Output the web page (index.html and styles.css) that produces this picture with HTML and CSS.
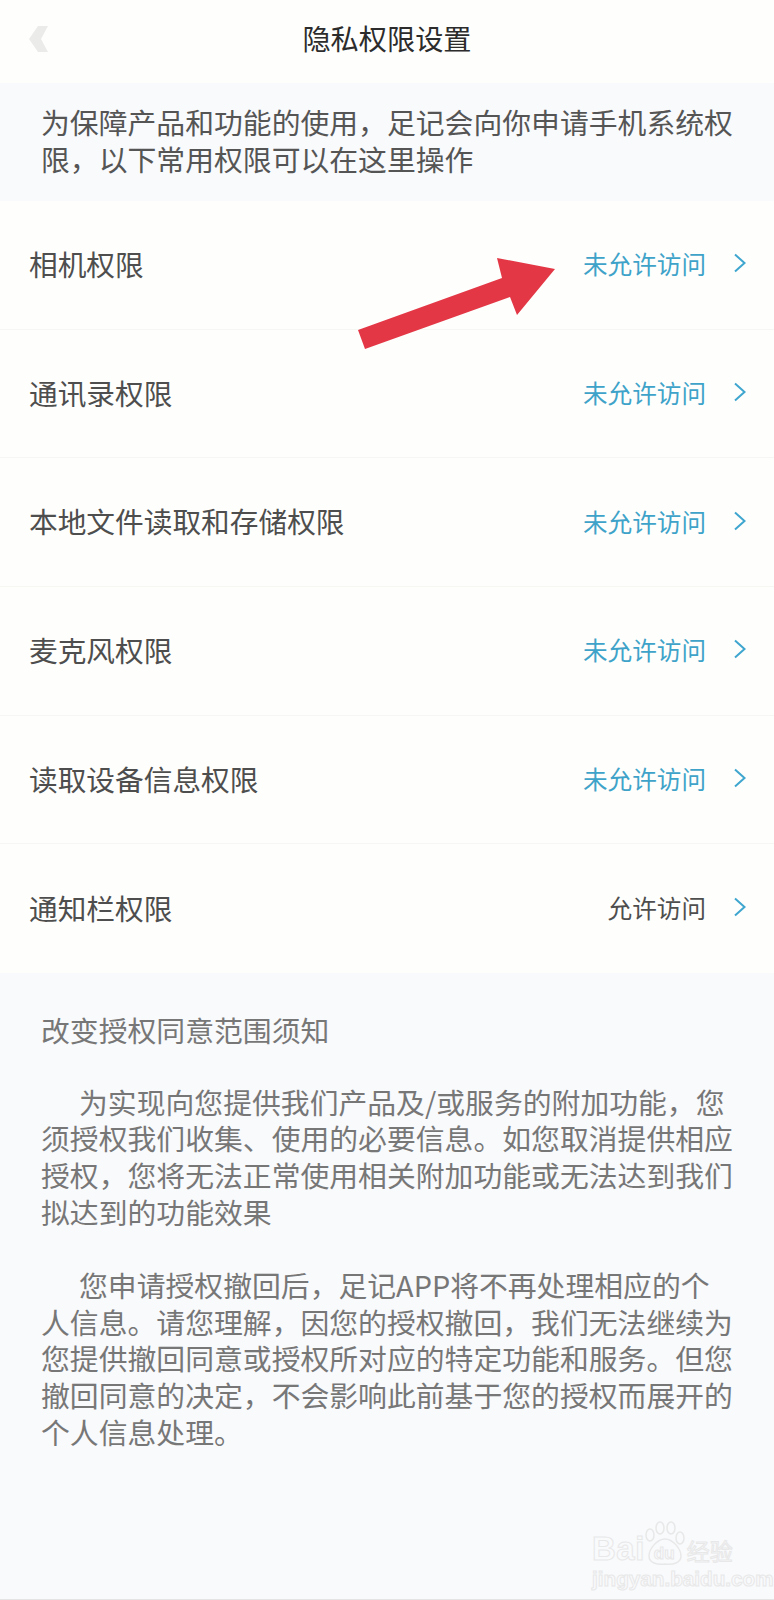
FILE: index.html
```html
<!DOCTYPE html>
<html lang="zh-CN">
<head>
    <meta charset="UTF-8">
    <meta name="viewport" content="width=device-width, initial-scale=1.0">
    <title>隐私权限设置</title>
    <link rel="stylesheet" href="styles.css">
</head>
<body>
    <div class="page">
        <div class="header">
            <svg class="back-icon" width="20" height="26" viewBox="0 0 20 26">
                <path d="M9 0H19L12 13L19 26H9L0 13Z" fill="#ebebe9"/>
            </svg>
            <div class="title">隐私权限设置</div>
        </div>

        <div class="notice">为保障产品和功能的使用，足记会向你申请手机系统权限，以下常用权限可以在这里操作</div>

        <div class="list">
            <div class="row">
                <span class="row-name">相机权限</span>
                <span class="row-status denied">未允许访问</span>
                <svg class="row-arrow" width="14" height="20" viewBox="0 0 14 20"><path d="M2 1.5L11.5 10L2 18.5" fill="none" stroke="#3fa6cf" stroke-width="2"/></svg>
            </div>
            <div class="row">
                <span class="row-name">通讯录权限</span>
                <span class="row-status denied">未允许访问</span>
                <svg class="row-arrow" width="14" height="20" viewBox="0 0 14 20"><path d="M2 1.5L11.5 10L2 18.5" fill="none" stroke="#3fa6cf" stroke-width="2"/></svg>
            </div>
            <div class="row">
                <span class="row-name">本地文件读取和存储权限</span>
                <span class="row-status denied">未允许访问</span>
                <svg class="row-arrow" width="14" height="20" viewBox="0 0 14 20"><path d="M2 1.5L11.5 10L2 18.5" fill="none" stroke="#3fa6cf" stroke-width="2"/></svg>
            </div>
            <div class="row">
                <span class="row-name">麦克风权限</span>
                <span class="row-status denied">未允许访问</span>
                <svg class="row-arrow" width="14" height="20" viewBox="0 0 14 20"><path d="M2 1.5L11.5 10L2 18.5" fill="none" stroke="#3fa6cf" stroke-width="2"/></svg>
            </div>
            <div class="row">
                <span class="row-name">读取设备信息权限</span>
                <span class="row-status denied">未允许访问</span>
                <svg class="row-arrow" width="14" height="20" viewBox="0 0 14 20"><path d="M2 1.5L11.5 10L2 18.5" fill="none" stroke="#3fa6cf" stroke-width="2"/></svg>
            </div>
            <div class="row">
                <span class="row-name">通知栏权限</span>
                <span class="row-status">允许访问</span>
                <svg class="row-arrow" width="14" height="20" viewBox="0 0 14 20"><path d="M2 1.5L11.5 10L2 18.5" fill="none" stroke="#3fa6cf" stroke-width="2"/></svg>
            </div>
        </div>

        <div class="terms">
            <p class="terms-title">改变授权同意范围须知</p>
            <p class="terms-text">为实现向您提供我们产品及/或服务的附加功能，您须授权我们收集、使用的必要信息。如您取消提供相应授权，您将无法正常使用相关附加功能或无法达到我们拟达到的功能效果</p>
            <p class="terms-text">您申请授权撤回后，足记APP将不再处理相应的个人信息。请您理解，因您的授权撤回，我们无法继续为您提供撤回同意或授权所对应的特定功能和服务。但您撤回同意的决定，不会影响此前基于您的授权而展开的个人信息处理。</p>
        </div>

        <!-- red arrow drawn over the first row -->
        <svg class="red-arrow" width="774" height="360" viewBox="0 0 774 360">
            <path d="M358 330L365 349L510 297L517 315L555 269L497 258L502 278Z" fill="#e33746"/>
        </svg>

        <div class="watermark">
            <div class="wm-top">
                <span class="wm-bai">Bai</span>
                <span class="wm-paw">
                    <svg width="40" height="46" viewBox="0 0 40 46">
                        <g fill="none" stroke="#e8e8e8" stroke-width="1.5">
                            <ellipse cx="5" cy="14" rx="4" ry="6"/>
                            <ellipse cx="15" cy="7" rx="4" ry="6"/>
                            <ellipse cx="26" cy="7" rx="4" ry="6"/>
                            <ellipse cx="35" cy="17" rx="4" ry="6"/>
                            <path d="M20 18C12 18 4 28 4 35C4 42 12 44 20 43C28 44 36 42 36 35C36 28 28 18 20 18Z"/>
                        </g>
                    </svg>
                    <span class="wm-du">du</span>
                </span>
                <span class="wm-jy">经验</span>
            </div>
            <div class="wm-url">jingyan.baidu.com</div>
        </div>
    </div>
</body>
</html>
```
FILE: styles.css
```css
* {
    box-sizing: border-box;
}

body {
    margin: 0;
    background-color: #f9fafc;
    font-family: "Noto Sans CJK SC", "Liberation Sans", sans-serif;
}

.page {
    position: relative;
    width: 774px;
    height: 1600px;
    overflow: hidden;
    background-color: #f9fafc;
    border-bottom: 1px solid #e4e4e4;
}

.header {
    height: 83px;
    padding-bottom: 8px;
    background-color: #fefefc;
    display: flex;
    align-items: center;
    justify-content: center;
    position: relative;
}

.back-icon {
    position: absolute;
    left: 29px;
    top: 26px;
}

.title {
    font-size: 28.2px;
    color: #2c2c2c;
}

.notice {
    height: 118px;
    padding: 21px 41px 0;
    font-size: 28.83px;
    line-height: 36.5px;
    color: #555;
}

.list {
    background-color: #fefefc;
}

.row {
    height: 128.7px;
    padding: 0 27px 3px 29px;
    display: flex;
    align-items: center;
    border-bottom: 1px solid #f6f6f3;
}

.row:last-child {
    border-bottom: none;
}

.row-name {
    flex: 1;
    font-size: 28.7px;
    color: #4e4e4e;
}

.row-status {
    font-size: 24.6px;
    color: #4e4e4e;
}

.denied {
    color: #3fa3c9;
}

.row-arrow {
    margin-left: 27px;
}

.terms {
    padding: 39px 41px 0;
    font-size: 28.83px;
    line-height: 36.7px;
    color: #777;
}

.terms p {
    margin: 0 0 36.7px;
}

.terms .terms-title {
    margin-bottom: 34.7px;
}

.terms-text {
    text-indent: 38px;
}

.red-arrow {
    position: absolute;
    left: 0;
    top: 0;
}

/* faint image watermark, bottom right */
.watermark {
    position: absolute;
    left: 592px;
    top: 1519px;
    width: 142px;
    color: #f9fafc;
    -webkit-text-stroke: 1px #e8e8e8;
    font-family: "Liberation Sans", sans-serif;
}

.wm-top {
    display: flex;
    align-items: flex-end;
    height: 48px;
}

.wm-bai {
    font-size: 33px;
    line-height: 36px;
    font-weight: 700;
    letter-spacing: 0.5px;
}

.wm-paw {
    position: relative;
    width: 40px;
    height: 46px;
    flex: none;
}

.wm-du {
    position: absolute;
    left: 9px;
    bottom: 3px;
    font-size: 17px;
    line-height: 20px;
    font-weight: 700;
}

.wm-jy {
    font-family: "Noto Sans CJK SC", sans-serif;
    font-size: 23px;
    line-height: 34px;
    margin-left: 2px;
    white-space: nowrap;
}

.wm-url {
    margin-top: 1px;
    font-size: 20.7px;
    line-height: 22px;
    font-weight: 700;
    white-space: nowrap;
}
```
